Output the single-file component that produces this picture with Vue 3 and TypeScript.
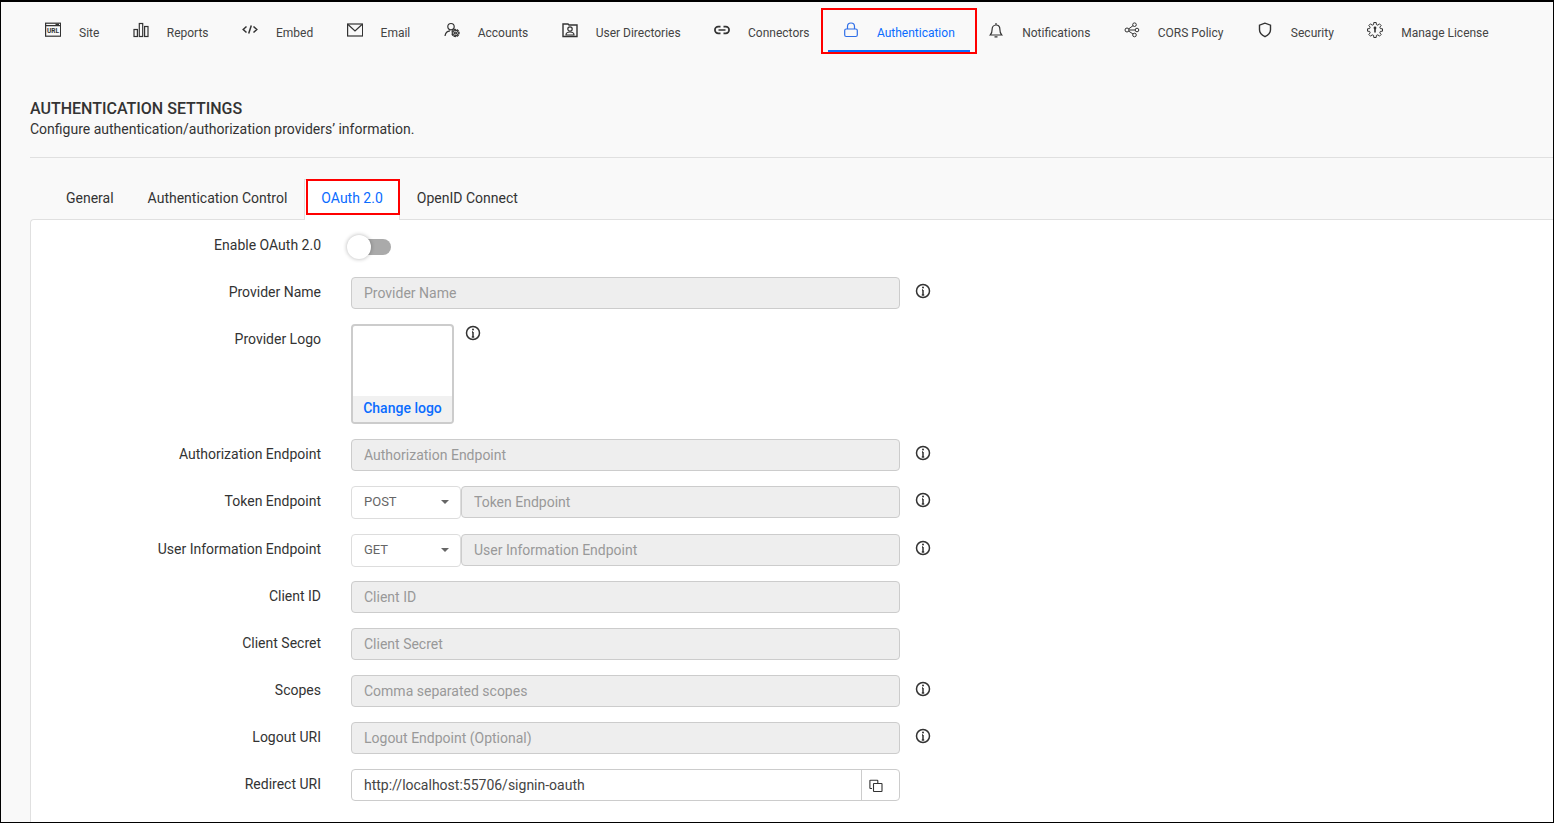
<script setup lang="ts">
interface NavItem { label: string; icon: string; active?: boolean }
const nav: NavItem[] = [
  { label: 'Site', icon: 'site' },
  { label: 'Reports', icon: 'reports' },
  { label: 'Embed', icon: 'embed' },
  { label: 'Email', icon: 'email' },
  { label: 'Accounts', icon: 'accounts' },
  { label: 'User Directories', icon: 'dirs' },
  { label: 'Connectors', icon: 'connectors' },
  { label: 'Authentication', icon: 'auth', active: true },
  { label: 'Notifications', icon: 'bell' },
  { label: 'CORS Policy', icon: 'cors' },
  { label: 'Security', icon: 'security' },
  { label: 'Manage License', icon: 'license' },
]
const tabs = ['General', 'Authentication Control', 'OAuth 2.0', 'OpenID Connect']

function gearPath(cx: number, cy: number, rOut: number, rIn: number, teeth: number): string {
  const pts: string[] = []
  const step = (Math.PI * 2) / teeth
  for (let i = 0; i < teeth; i++) {
    const a = i * step
    const seq: [number, number][] = [
      [rIn, a - step * 0.32],
      [rOut, a - step * 0.2],
      [rOut, a + step * 0.2],
      [rIn, a + step * 0.32],
    ]
    for (const [r, t] of seq) {
      pts.push(`${(cx + r * Math.cos(t)).toFixed(2)} ${(cy + r * Math.sin(t)).toFixed(2)}`)
    }
  }
  return 'M' + pts.join('L') + 'Z'
}
const gearLarge = gearPath(8, 8, 7.6, 5.6, 8)
const gearSmall = gearPath(11.5, 11, 3.6, 2.6, 7)
</script>

<template>
  <div class="page">
    <nav class="nav">
      <a v-for="n in nav" :key="n.label" class="nav-item" :class="{ active: n.active }">
        <svg class="nav-icon" viewBox="0 0 16 16" fill="none" stroke="currentColor" stroke-width="1.2">
          <template v-if="n.icon === 'site'">
            <rect x="0.6" y="1.2" width="15" height="13" />
            <path d="M1 3.6h14M10.500 2.400h3.500" />
            <text x="8" y="11.400" text-anchor="middle" class="url">URL</text>
          </template>
          <template v-else-if="n.icon === 'reports'">
            <rect x="1" y="7.5" width="3.400" height="7" /><rect x="6.3" y="1.5" width="3.400" height="13" /><rect x="11.600" y="4.500" width="3.400" height="10" />
          </template>
          <template v-else-if="n.icon === 'embed'">
            <path stroke-width="1.5" d="M4.500 4.500 1.200 7.500l3.300 3M11.500 4.500l3.300 3-3.300 3M9.300 3.500 6.700 11.500" />
          </template>
          <template v-else-if="n.icon === 'email'">
            <rect x="0.600" y="2" width="15" height="12" /><path d="m1 2.500 7 6.500 7-6.500" />
          </template>
          <template v-else-if="n.icon === 'accounts'">
            <circle cx="7" cy="4.700" r="3.200" /><path d="M1 14c.5-3.500 2.300-5 5-5.200" /><path :d="gearSmall" /><circle cx="11.500" cy="11" r="1" />
          </template>
          <template v-else-if="n.icon === 'dirs'">
            <path stroke-width="1.4" d="M1 4V2h5l1 1h8v11.500H1z" /><circle cx="8" cy="7" r="2.200" /><path d="M4 13c0-2.500 1.500-3 4-3s4 .5 4 3z" />
          </template>
          <template v-else-if="n.icon === 'connectors'">
            <path stroke-width="1.7" d="M6.500 4.700H4.200a3.300 3.300 0 0 0 0 6.600h2.300M9.500 4.700h2.300a3.300 3.300 0 0 1 0 6.600H9.500M4.500 8h7" />
          </template>
          <template v-else-if="n.icon === 'auth'">
            <rect x="1.700" y="7" width="12.600" height="7.500" rx="1.500" /><path d="M4.500 7V4.500a3.500 3.500 0 0 1 7 0V7" />
          </template>
          <template v-else-if="n.icon === 'bell'">
            <path d="M2.300 13c1.200-1.200 1.800-2.800 1.800-5.500C4.100 5 5.500 3 8 3s3.900 2 3.900 4.500c0 2.700.6 4.300 1.800 5.500zM8 1v2M6.500 14.800h3" />
          </template>
          <template v-else-if="n.icon === 'cors'">
            <g stroke-width="1">
              <circle cx="3" cy="8" r="2" /><circle cx="10.500" cy="2.700" r="1.800" /><circle cx="13" cy="8" r="1.800" /><circle cx="10.500" cy="13" r="1.800" />
              <path d="M4.700 6.900 9 3.700M5 8h6.200M4.700 9.100 9 12" />
            </g>
          </template>
          <template v-else-if="n.icon === 'security'">
            <path stroke-width="1.4" d="M8 1.200 2.500 3.200v4.500c0 3.200 2.500 5.500 5.500 7 3-1.500 5.500-3.800 5.500-7V3.200z" />
          </template>
          <template v-else-if="n.icon === 'license'">
            <path stroke-width="1" :d="gearLarge" /><circle cx="8" cy="6" r="1.400" fill="currentColor" stroke="none" /><path stroke-width="1.600" d="M8 7v3.500" />
          </template>
        </svg>
        <span>{{ n.label }}</span>
      </a>
    </nav>

    <header class="head">
      <h1>AUTHENTICATION SETTINGS</h1>
      <p>Configure authentication/authorization providers’ information.</p>
    </header>

    <div class="tabs">
      <a v-for="t in tabs" :key="t" class="tab" :class="{ on: t === 'OAuth 2.0' }">{{ t }}</a>
    </div>

    <section class="panel">
      <div class="row toggle-row">
        <label>Enable OAuth 2.0</label>
        <div class="switch"><span class="knob"></span></div>
      </div>

      <div class="row">
        <label>Provider Name</label>
        <input class="field" disabled placeholder="Provider Name" />
        <svg class="info" viewBox="0 0 16 16"><circle cx="8" cy="8" r="6.500" /><path d="M8 7v5M6.800 12h2.400M7 7h1" /><circle class="dot" cx="8" cy="4.600" r="1" /></svg>
      </div>

      <div class="row logo-row">
        <label>Provider Logo</label>
        <div class="logo"><div class="logo-space"></div><div class="logo-btn">Change logo</div></div>
        <svg class="info logo-info" viewBox="0 0 16 16"><circle cx="8" cy="8" r="6.500" /><path d="M8 7v5M6.800 12h2.400M7 7h1" /><circle class="dot" cx="8" cy="4.600" r="1" /></svg>
      </div>

      <div class="row">
        <label>Authorization Endpoint</label>
        <input class="field" disabled placeholder="Authorization Endpoint" />
        <svg class="info" viewBox="0 0 16 16"><circle cx="8" cy="8" r="6.500" /><path d="M8 7v5M6.800 12h2.400M7 7h1" /><circle class="dot" cx="8" cy="4.600" r="1" /></svg>
      </div>

      <div class="row token-row">
        <label>Token Endpoint</label>
        <div class="group">
          <div class="select"><span>POST</span><i class="caret"></i></div>
          <input class="field" disabled placeholder="Token Endpoint" />
        </div>
        <svg class="info" viewBox="0 0 16 16"><circle cx="8" cy="8" r="6.500" /><path d="M8 7v5M6.800 12h2.400M7 7h1" /><circle class="dot" cx="8" cy="4.600" r="1" /></svg>
      </div>

      <div class="row">
        <label>User Information Endpoint</label>
        <div class="group">
          <div class="select"><span>GET</span><i class="caret"></i></div>
          <input class="field" disabled placeholder="User Information Endpoint" />
        </div>
        <svg class="info" viewBox="0 0 16 16"><circle cx="8" cy="8" r="6.500" /><path d="M8 7v5M6.800 12h2.400M7 7h1" /><circle class="dot" cx="8" cy="4.600" r="1" /></svg>
      </div>

      <div class="row">
        <label>Client ID</label>
        <input class="field" disabled placeholder="Client ID" />
      </div>

      <div class="row">
        <label>Client Secret</label>
        <input class="field" disabled placeholder="Client Secret" />
      </div>

      <div class="row">
        <label>Scopes</label>
        <input class="field" disabled placeholder="Comma separated scopes" />
        <svg class="info" viewBox="0 0 16 16"><circle cx="8" cy="8" r="6.500" /><path d="M8 7v5M6.800 12h2.400M7 7h1" /><circle class="dot" cx="8" cy="4.600" r="1" /></svg>
      </div>

      <div class="row">
        <label>Logout URI</label>
        <input class="field" disabled placeholder="Logout Endpoint (Optional)" />
        <svg class="info" viewBox="0 0 16 16"><circle cx="8" cy="8" r="6.500" /><path d="M8 7v5M6.800 12h2.400M7 7h1" /><circle class="dot" cx="8" cy="4.600" r="1" /></svg>
      </div>

      <div class="row">
        <label>Redirect URI</label>
        <div class="copy-field">
          <span class="value">http://localhost:55706/signin-oauth</span>
          <span class="copy-btn">
            <svg viewBox="0 0 14 14" fill="none" stroke="#333" stroke-width="1.1"><rect x="4.500" y="4.500" width="8.500" height="8" rx=".5" /><path d="M3 9.500H1.500a.6.6 0 0 1-.6-.6V1.800a.6.6 0 0 1 .6-.6h6.700a.6.6 0 0 1 .6.6V4" /></svg>
          </span>
        </div>
      </div>
    </section>
  </div>
</template>

<style>
html, body { margin: 0; padding: 0; overflow: hidden; }
</style>

<style scoped>
.page {
  width: 1554px;
  height: 823px;
  box-sizing: border-box;
  border: solid #000;
  border-width: 2px 1px 1px 1px;
  background: #f9f9f9;
  overflow: hidden;
  font-family: Roboto, "Liberation Sans", sans-serif;
  color: #333;
  font-size: 14px;
}
.nav {
  display: flex;
  gap: 3.4px;
  padding: 0 0 0 29px;
  height: 50px;
}
.nav-item {
  position: relative;
  display: flex;
  align-items: flex-start;
  padding: 20px 15px 0;
  box-sizing: border-box;
  height: 50px;
  font-size: 12px;
  line-height: 23px;
  color: #444;
  white-space: nowrap;
}
.nav-icon {
  width: 16px;
  height: 16px;
  margin-right: 18px;
  color: #333;
}
.url { font: 700 6.6px Roboto, sans-serif; fill: currentColor; stroke: none; }
.nav-item.active { color: #0a6cff; border-bottom: 2px solid #0a6cff; }
.nav-item.active .nav-icon { color: #2f6fe8; }
.nav-item.active::after {
  content: "";
  position: absolute;
  inset: 6px -7px -4px -7px;
  border: 2px solid #f00;
}
.head { padding: 47px 0 0 29px; }
.head h1 {
  margin: 0;
  font-size: 16px;
  line-height: 20px;
  font-weight: 500;
  color: #333;
}
.head p {
  margin: 0;
  font-size: 14px;
  line-height: 20px;
  padding-bottom: 18px;
  border-bottom: 1px solid #e0e0e0;
}
.tabs {
  display: flex;
  padding: 21px 0 0 48px;
  height: 41px;
}
.tab {
  position: relative;
  padding: 9px 17px 0;
  box-sizing: border-box;
  line-height: 20px;
  height: 41px;
  white-space: nowrap;
}
.tab.on {
  color: #0a6cff;
  background: #fff;
  border: solid #e0e0e0;
  border-width: 1px 1px 0;
  padding: 8px 16px 0;
  z-index: 1;
}
.tab.on::after {
  content: "";
  position: absolute;
  inset: -1px -1px 5px 1px;
  border: 2px solid #f00;
}
.panel {
  margin: -1px 0 0 29px;
  background: #fff;
  border: 1px solid #e0e0e0;
  border-right: 0;
  border-radius: 4px 0 0 0;
  padding-top: 15px;
  height: 640px;
  box-sizing: border-box;
}
.row {
  display: flex;
  align-items: flex-start;
  margin-bottom: 15px;
  height: 32px;
}
.token-row { height: 33px; }
.row label {
  width: 290px;
  text-align: right;
  margin-right: 30px;
  line-height: 30px;
  color: #333;
  flex: none;
}
.toggle-row { height: 26px; margin-bottom: 16px; }
.toggle-row label { line-height: 20px; }
.switch {
  position: relative;
  width: 40px;
  height: 16px;
  margin-top: 4px;
  border-radius: 8px;
  background: #aaa;
}
.knob {
  position: absolute;
  left: -4px;
  top: -4px;
  width: 24px;
  height: 24px;
  border-radius: 50%;
  background: #fff;
  box-shadow: 0 0 4px rgba(0, 0, 0, .3);
}
.field {
  box-sizing: border-box;
  width: 549px;
  height: 32px;
  flex: none;
  border: 1px solid #ccc;
  border-radius: 4px;
  background: #eee;
  padding: 0 12px 1px;
  font: 14px Roboto, sans-serif;
  outline: none;
}
.field::placeholder { color: #999; opacity: 1; }
.info {
  width: 16px;
  height: 16px;
  flex: none;
  margin: 6px 0 0 15px;
  fill: none;
  stroke: #333;
  stroke-width: 1.5;
}
.info .dot { fill: #333; stroke: none; }
.logo-row { height: 100px; }
.logo-info { margin: 1px 0 0 11px; }
.logo {
  box-sizing: border-box;
  width: 103px;
  height: 100px;
  flex: none;
  border: 2px solid #ccc;
  border-radius: 4px;
  display: flex;
  flex-direction: column;
  background: #fff;
  overflow: hidden;
}
.logo-space { flex: 1; }
.logo-btn {
  height: 26px;
  background: #f1f1f1;
  color: #0a6cff;
  font-weight: 500;
  text-align: center;
  line-height: 24px;
}
.group { display: flex; width: 549px; flex: none; }
.select {
  box-sizing: border-box;
  width: 110px;
  height: 33px;
  flex: none;
  border: 1px solid #ddd;
  border-radius: 4px;
  background: #fff;
  padding: 0 12px 2px;
  display: flex;
  align-items: center;
  justify-content: space-between;
  font-size: 13px;
  color: #666;
}
.caret {
  width: 0;
  height: 0;
  margin-right: -1px;
  border: solid transparent;
  border-width: 4px 4px 0;
  border-top-color: #666;
}
.group .field { width: 439px; }
.copy-field {
  box-sizing: border-box;
  width: 549px;
  height: 32px;
  flex: none;
  display: flex;
  border: 1px solid #ccc;
  border-radius: 4px;
  background: #fff;
}
.value { flex: 1; padding-left: 12px; line-height: 30px; color: #444; }
.copy-btn {
  width: 38px;
  border-left: 1px solid #ccc;
  display: flex;
  align-items: center;
  padding-left: 7px;
  box-sizing: border-box;
}
.copy-btn svg { width: 14px; height: 14px; margin-top: 2px; }
</style>
